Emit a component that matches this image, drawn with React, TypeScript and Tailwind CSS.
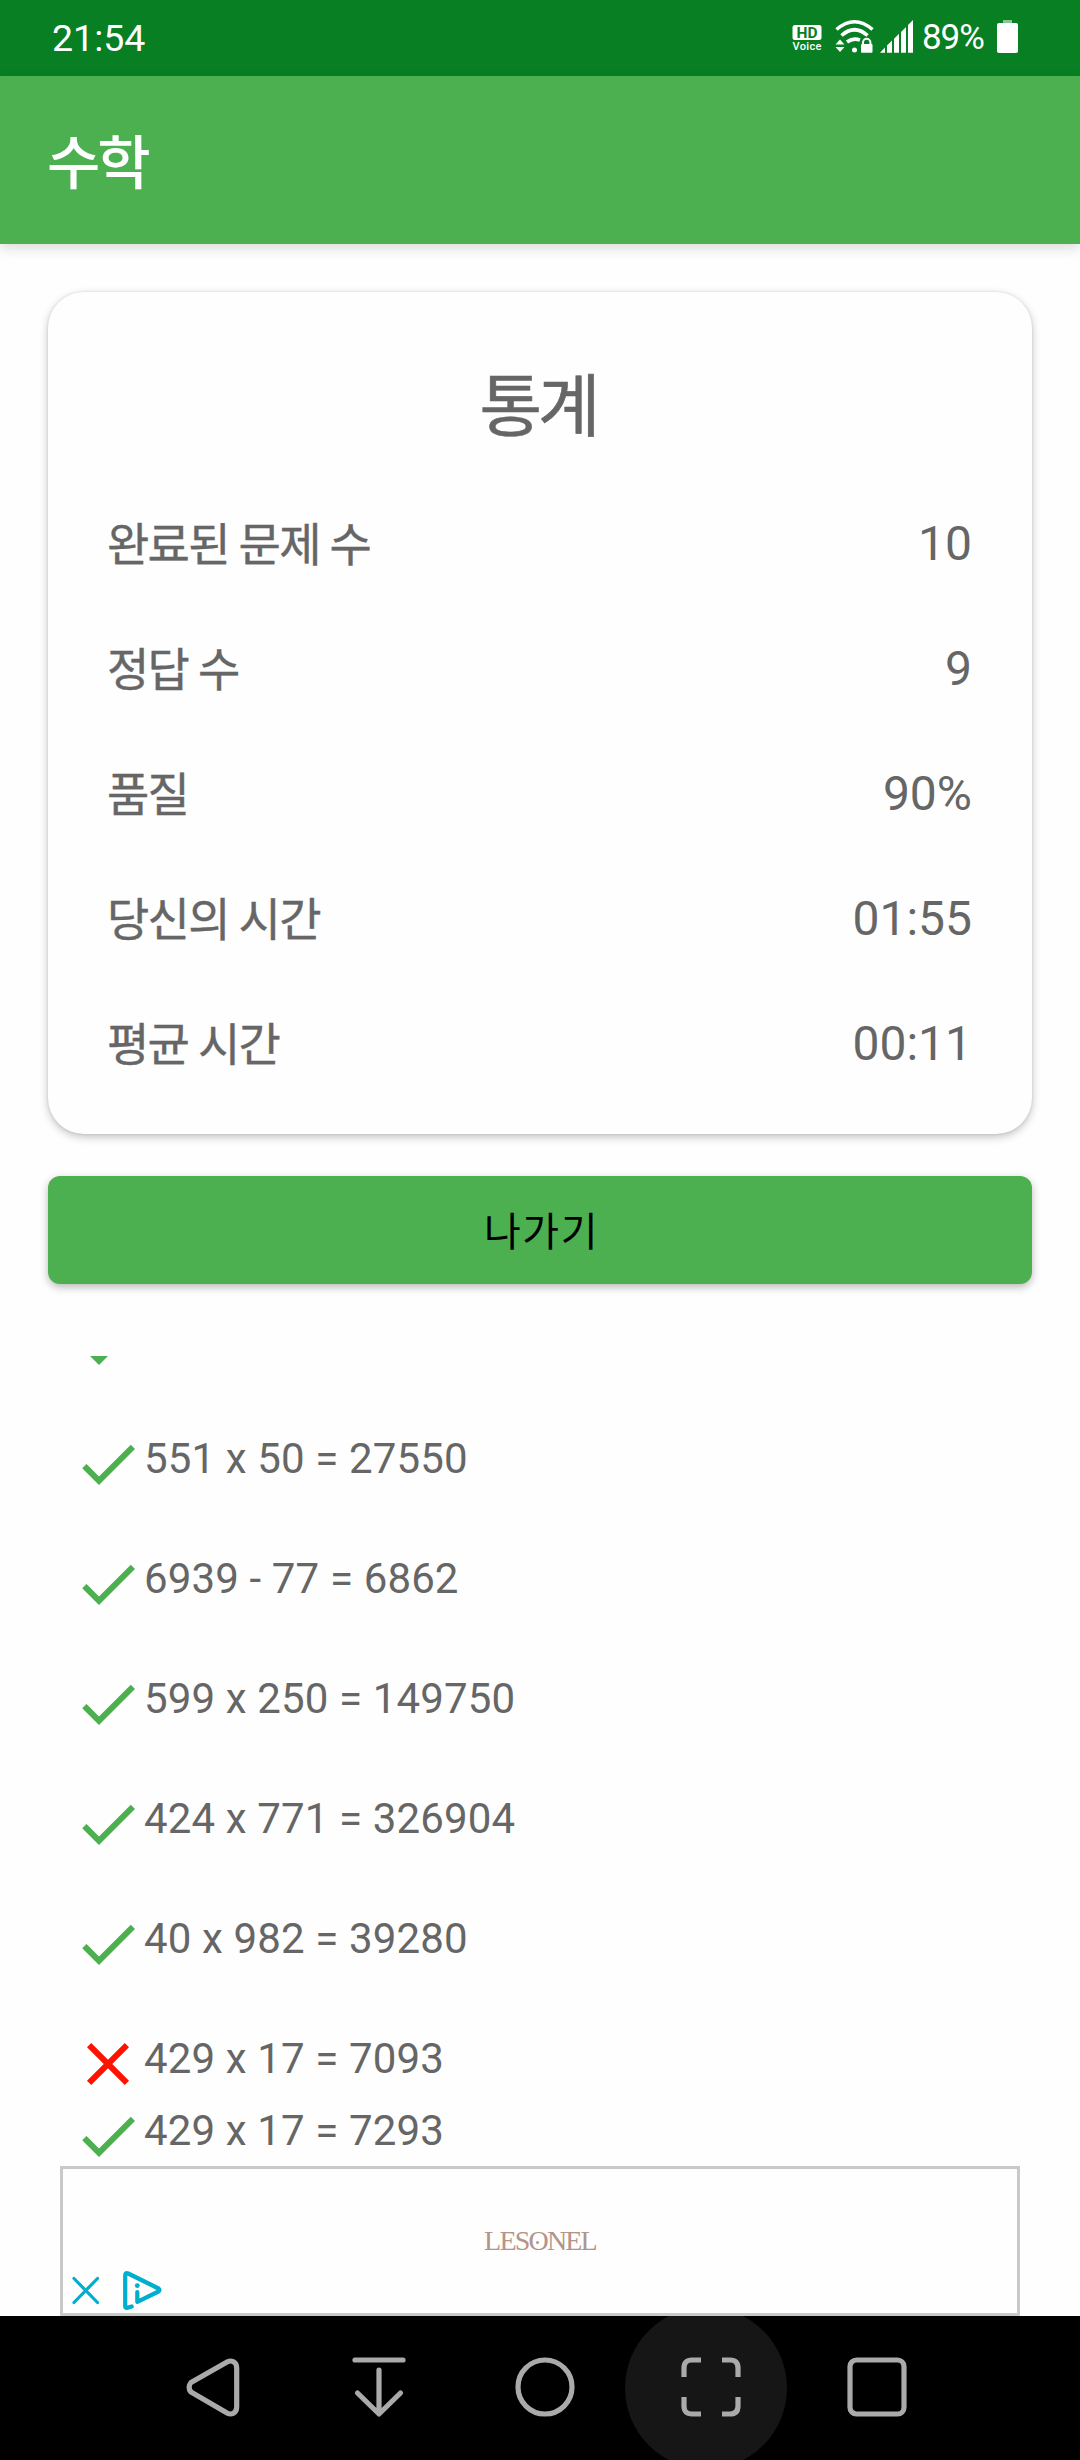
import type { ReactNode } from "react";

const stats = [
  { label: "완료된 문제 수", value: "10" },
  { label: "정답 수", value: "9" },
  { label: "품질", value: "90%" },
  { label: "당신의 시간", value: "01:55" },
  { label: "평균 시간", value: "00:11" },
];

// each task holds every attempt made at it
const tasks = [
  [{ text: "551 x 50 = 27550", correct: true }],
  [{ text: "6939 - 77 = 6862", correct: true }],
  [{ text: "599 x 250 = 149750", correct: true }],
  [{ text: "424 x 771 = 326904", correct: true }],
  [{ text: "40 x 982 = 39280", correct: true }],
  [
    { text: "429 x 17 = 7093", correct: false },
    { text: "429 x 17 = 7293", correct: true },
  ],
];

function StatusBar() {
  return (
    <div className="flex h-[76px] items-start bg-[#087f23] pl-[52px] pr-[62px] text-white">
      <span className="pt-[16px] text-[37.5px] leading-[44px]">21:54</span>
      <div className="ml-auto flex items-start">
        <svg width="30" height="76" viewBox="0 0 30 76">
          <rect x="0.5" y="25" width="29" height="15" rx="2.5" fill="#fff" />
          <text x="15" y="38" textAnchor="middle" fontSize="15.5" fontWeight="700" fill="#087f23" textLength="21">HD</text>
          <text x="15" y="50" textAnchor="middle" fontSize="11" fontWeight="500" fill="#fff" textLength="29">Voice</text>
        </svg>
        <svg className="ml-[13px]" width="40" height="76" viewBox="0 0 40 76" fill="none" stroke="#fff">
          <path d="M1.5 29.5Q19.5 14 37.5 29.5" strokeWidth="3.6" />
          <path d="M6.5 35.5Q19.5 24 32.5 35.5" strokeWidth="3.6" />
          <path d="M12 42Q18 37.5 25 40" strokeWidth="3.6" />
          <circle cx="19.5" cy="50" r="2.5" fill="#fff" stroke="none" />
          <path d="M0.5 44.5L5 39.5L9.5 44.5ZM0.5 47L5 52L9.5 47Z" fill="#fff" stroke="none" />
          <path d="M28 45V42.5A3.7 3.7 0 0 1 35.4 42.5V45" strokeWidth="2" />
          <rect x="26" y="44" width="11.5" height="8.7" rx="1" fill="#fff" stroke="none" />
        </svg>
        <svg className="ml-[5px]" width="34" height="76" viewBox="0 0 34 76" fill="#fff">
          <path d="M0 52.7L5 47.5V52.7ZM7 52.7V45.5L12 40.5V52.7ZM14 52.7V38.7L19 33.7V52.7ZM21 52.7V32L26 27V52.7ZM28 52.7V25L33 20V52.7Z" />
        </svg>
        <span className="ml-[8px] w-[64px] pt-[17px] text-[35px] leading-[42px] tracking-[-1.1px]">89%</span>
        <svg className="ml-[11px]" width="21" height="76" viewBox="0 0 21 76">
          <path d="M6 20H15V23H6Z" fill="#8ac596" />
          <rect y="23" width="21" height="30" rx="2" fill="#fff" />
        </svg>
      </div>
    </div>
  );
}

function ResultIcon({ correct }: { correct: boolean }) {
  return (
    <svg className="size-[72px] shrink-0" viewBox="0 0 24 24">
      {correct ? (
        <path fill="#4caf50" d="M9 16.17L4.83 12l-1.42 1.41L9 19 21 7l-1.41-1.41z" />
      ) : (
        <path
          fill="#ff1200"
          d="M19 6.41L17.59 5 12 10.59 6.41 5 5 6.41 10.59 12 5 17.59 6.41 19 12 13.41 17.59 19 19 17.59 13.41 12z"
        />
      )}
    </svg>
  );
}

function AdBanner() {
  return (
    <div className="relative z-10 mx-[60px] flex h-[150px] shrink-0 items-center justify-center border-3 border-[#c9c9c9] bg-[#fefefe]">
      <span className="relative font-['Liberation_Serif',serif] text-[28px] leading-none tracking-[-1.8px] text-[#b3948a]">
        LESONEL
        <span className="absolute left-[52px] top-[14px] size-[3px] rounded-full bg-[#b3948a]" />
      </span>
      <svg className="absolute bottom-0 left-0" width="110" height="50" viewBox="0 0 110 50" fill="none" stroke="#00aecd">
        <path d="M11 15.5L34.5 39.5M34.5 15.5L11 39.5" strokeWidth="3.2" strokeLinecap="round" />
        <path d="M68.7 43.5L64.5 44.8Q62.2 45.5 62.2 43V12.5Q62.2 9 65.2 10.5L95.5 25.5Q97.5 27 95.5 28.5L74.3 38.8V29" strokeWidth="4.2" strokeLinecap="round" strokeLinejoin="round" />
        <circle cx="74.3" cy="22.6" r="2.4" fill="#00aecd" stroke="none" />
      </svg>
    </div>
  );
}

function NavButton({ active, children }: { active?: boolean; children: ReactNode }) {
  return (
    <button className="relative flex h-full w-[166px] items-center justify-center">
      {active && <span className="absolute -left-[3px] -top-[9px] size-[162px] rounded-full bg-[#161616]" />}
      <svg className="relative" width="64" height="64" viewBox="0 0 64 64" fill="none" stroke="#aaa" strokeWidth="5.2">
        {children}
      </svg>
    </button>
  );
}

function NavigationBar() {
  return (
    <div className="flex h-[144px] shrink-0 overflow-hidden bg-black pl-[130px]">
      <NavButton>
        <path d="M10 26.5L46.5 5.8Q49.5 4.2 52.5 5.8Q55.7 7.5 55.7 12V51Q55.7 55.5 52.5 57.2Q49.5 58.8 46.5 57.2L10 36Q6.2 31.3 10 26.5Z" strokeLinejoin="round" />
      </NavButton>
      <NavButton>
        <path d="M8 4H56M32 14V57M10.5 37L32 58L53.5 37" strokeLinecap="round" strokeLinejoin="round" />
      </NavButton>
      <NavButton>
        <circle cx="32" cy="31" r="27" />
      </NavButton>
      <NavButton active>
        <path d="M5 21V12Q5 4 13 4H22M43 4H51Q59 4 59 12V21M59 41V50Q59 58 51 58H43M22 58H13Q5 58 5 50V41" />
      </NavButton>
      <NavButton>
        <rect x="5" y="4" width="54" height="54" rx="6.5" />
      </NavButton>
    </div>
  );
}

export default function App() {
  return (
    <div className="flex h-[2460px] w-[1080px] flex-col overflow-hidden bg-[#fefefe] font-[Roboto,'Noto_Sans_CJK_KR',sans-serif] text-[#666]">
      <StatusBar />
      <header className="flex h-[168px] shrink-0 items-center bg-[#4caf50] pl-[47px] pt-[8px] shadow-[0_4px_12px_rgba(0,0,0,0.14)]">
        <h1 className="text-[58px] font-medium leading-none tracking-[-3px] text-white">수학</h1>
      </header>

      <main className="flex min-h-0 flex-1 flex-col overflow-hidden px-[48px] pt-[48px]">
        <section className="h-[842px] shrink-0 rounded-[36px] bg-[#fefefe] px-[60px] pt-[64px] shadow-[0_3px_8px_rgba(0,0,0,0.24),0_0_3px_rgba(0,0,0,0.1)]">
          <h2 className="flex h-[100px] items-center justify-center pr-[4px] pt-[4px] text-[68px] leading-none tracking-[-4px] [-webkit-text-stroke:0.6px]">
            통계
          </h2>
          <dl className="mt-[25px]">
            {stats.map((stat) => (
              <div key={stat.label} className="flex h-[125px] items-center justify-between text-[48px] leading-none">
                <dt className="-ml-px pt-[2px] text-[46px] tracking-[-1.7px] [-webkit-text-stroke:0.4px]">{stat.label}</dt>
                <dd>{stat.value}</dd>
              </div>
            ))}
          </dl>
        </section>

        <button className="mt-[42px] h-[108px] shrink-0 rounded-[12px] bg-[#4caf50] pl-[3px] pt-[6px] text-[40px] leading-none tracking-[1.5px] text-black shadow-[0_3px_8px_rgba(0,0,0,0.28)]">
          나가기
        </button>

        <div className="flex h-[144px] shrink-0 items-end pb-[54px] pl-[42px]">
          <svg width="18" height="18" viewBox="0 0 18 18">
            <path d="M0 0H18L9 9Z" fill="#4caf50" />
          </svg>
        </div>

        <ul className="flex flex-col gap-[48px] pl-[24px]">
          {tasks.map((attempts) => (
            <li key={attempts[0].text}>
              {attempts.map((attempt) => (
                <div key={attempt.text} className="flex h-[72px]">
                  <ResultIcon correct={attempt.correct} />
                  <span className="pt-[6px] text-[42px] leading-[49px] tracking-[0.14px]">{attempt.text}</span>
                </div>
              ))}
            </li>
          ))}
        </ul>
      </main>

      <AdBanner />
      <NavigationBar />
    </div>
  );
}
